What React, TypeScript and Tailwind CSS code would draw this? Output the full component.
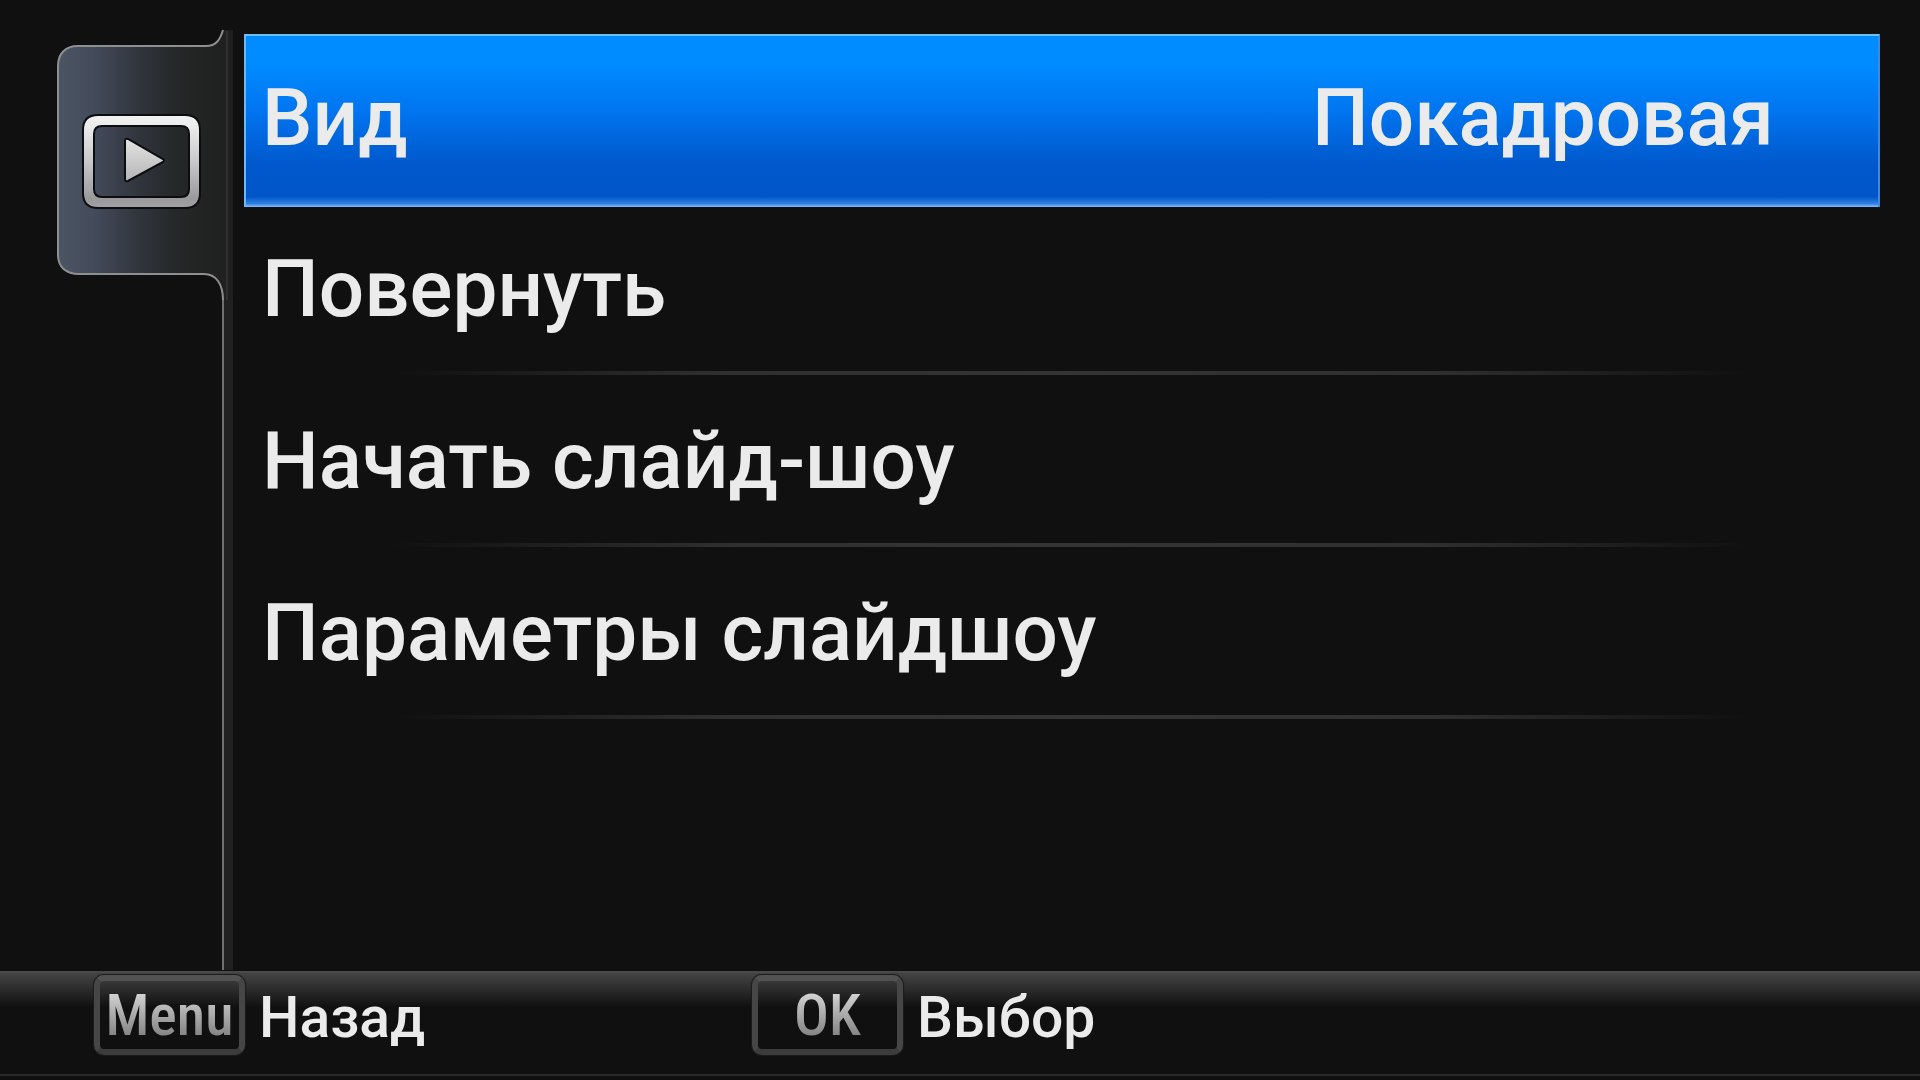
import React from "react";

const menuItems = [
  { label: "Вид", value: "Покадровая" },
  { label: "Повернуть" },
  { label: "Начать слайд-шоу" },
  { label: "Параметры слайдшоу" },
];

const hints = [
  { keyName: "Menu", label: "Назад" },
  { keyName: "OK", label: "Выбор" },
];

const TabIcon = () => {
  return (
    <svg
      className="block h-[272px] w-[178px]"
      viewBox="56 28 178 272"
      aria-hidden="true"
    >
      <defs>
        <linearGradient id="tabFill" x1="0" y1="0" x2="1" y2="0">
          <stop offset="0" stopColor="#4a5563" />
          <stop offset="0.2" stopColor="#444b5b" />
          <stop offset="0.45" stopColor="#31363e" />
          <stop offset="0.68" stopColor="#252828" />
          <stop offset="1" stopColor="#1e1e1e" />
        </linearGradient>
        <linearGradient id="frameFill" x1="0" y1="0" x2="0" y2="1">
          <stop offset="0" stopColor="#f2f2f2" />
          <stop offset="0.12" stopColor="#ececec" />
          <stop offset="0.5" stopColor="#c8c8ca" />
          <stop offset="0.9" stopColor="#9a9a9c" />
          <stop offset="1" stopColor="#a2a2a4" />
        </linearGradient>
        <linearGradient id="playFill" x1="0" y1="0" x2="0" y2="1">
          <stop offset="0" stopColor="#e4e4e4" />
          <stop offset="1" stopColor="#b4b4b6" />
        </linearGradient>
      </defs>
      <path
        d="M233 30H223C220 40 216 46 206 46H78C65 46 58 54 58 66V255C58 267 66 274 79 274H204C216 274 223 284 223 300H233Z"
        fill="url(#tabFill)"
      />
      <path
        d="M223 30C220 40 216 46 206 46H78C65 46 58 54 58 66V255C58 267 66 274 79 274H204C216 274 223 284 223 300"
        fill="none"
        stroke="#8e8f90"
        strokeWidth="2"
      />
      <path d="M227 31V300" stroke="#303030" strokeWidth="2" />
      <path
        d="M98 115H185Q200 115 200 130V193Q200 208 185 208H98Q83 208 83 193V130Q83 115 98 115ZM102 126Q94 126 94 134V189Q94 197 102 197H181Q189 197 189 189V134Q189 126 181 126Z"
        fill="url(#frameFill)"
        fillRule="evenodd"
        stroke="#0c0d0f"
        strokeWidth="2"
      />
      <path
        d="M125 141V179Q125 182 128 181L163 162Q165 160 163 159L128 139Q125 138 125 141Z"
        fill="url(#playFill)"
        stroke="#0c0d0f"
        strokeWidth="2"
      />
    </svg>
  );
};

const MenuRow = ({ label, value }: { label: string; value?: string }) => {
  if (value) {
    return (
      <button className="flex h-[173px] w-full items-center justify-between border-t-2 border-r-2 border-l-2 border-t-[#70c0ff] border-r-[#3a8ae6] border-l-[#6ab8ff] bg-[linear-gradient(to_bottom,#008cff_0%,#008aff_18%,#0074ee_45%,#0058cc_75%,#0056c8_94%,#2f7fe0_98%,#80c0ff_100%)] pr-[104px] pb-2 pl-4 text-left">
        <span>{label}</span>
        <span>{value}</span>
      </button>
    );
  }
  return (
    <button className="flex h-[172px] w-full flex-col text-left">
      <span className="flex flex-1 items-center pl-[18px]">{label}</span>
      <span className="mb-1 block h-1 w-full bg-[linear-gradient(to_right,transparent_9%,#303030_30%,#343434_50%,#303030_72%,transparent_92%)]" />
    </button>
  );
};

const Hint = ({ keyName, label }: { keyName: string; label: string }) => {
  return (
    <button className="flex w-[658px] items-start text-left">
      <span className="mt-0.5 flex h-20 w-[151px] items-center justify-center rounded-[10px] border-[6px] border-t-[#525252] border-r-[#464646] border-b-[#3c3c3c] border-l-[#464646] shadow-[0_0_1px_1px_#1c1c1c]">
        <span className="bg-linear-to-b from-[#d0d0d0] from-20% to-[#858585] to-80% bg-clip-text font-['Roboto_Condensed','Roboto','sans-serif'] text-[58px] leading-[68px] text-transparent">
          {keyName}
        </span>
      </span>
      <span className="pl-[14px] text-[57px] leading-[90px]">{label}</span>
    </button>
  );
};

const App = () => {
  return (
    <div className="flex min-h-screen w-full flex-col bg-[#101010] font-['Roboto','sans-serif'] text-[#ebebeb]">
      <main className="flex flex-1">
        <aside className="flex w-[244px] shrink-0 flex-col pt-7 pl-14">
          <button aria-label="Воспроизведение">
            <TabIcon />
          </button>
          <div className="mb-px ml-[166px] w-[11px] flex-1 border-l-2 border-[#707070] bg-[#212121]" />
        </aside>
        <nav className="flex-1 pt-[34px] pr-10 text-[80px] leading-[100px] font-medium">
          {menuItems.map((item) => (
            <MenuRow key={item.label} {...item} />
          ))}
        </nav>
      </main>
      <footer className="h-[109px] border-t-2 border-[#4a4a4a] bg-[linear-gradient(to_bottom,#444444_0px,#2c2c2c_16px,#101010_34px)] font-medium">
        <div className="flex h-[103px] border-b-2 border-[#2a2a2a] pl-[94px]">
          {hints.map((hint) => (
            <Hint key={hint.keyName} {...hint} />
          ))}
        </div>
      </footer>
    </div>
  );
};

export default App;
